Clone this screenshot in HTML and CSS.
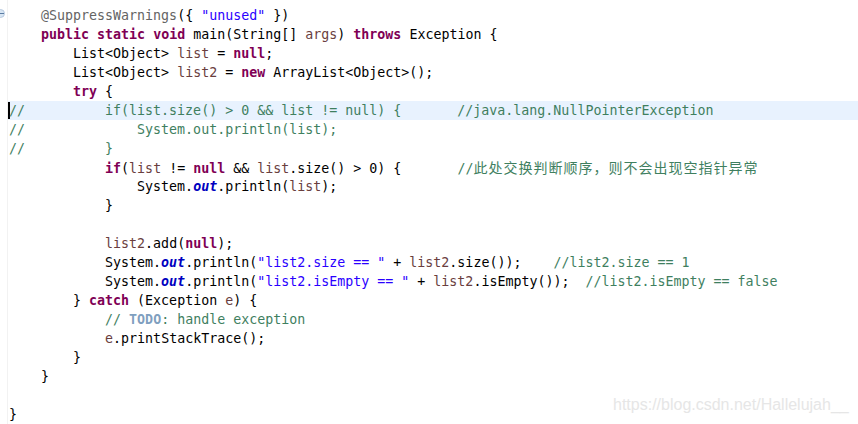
FILE: index.html
```html
<!DOCTYPE html>
<html>
<head>
<meta charset="utf-8">
<link rel="stylesheet" href="styles.css">
</head>
<body>
<div class="editor">
  <div class="ruler">
    <span class="fold"></span>
  </div>
  <div class="code">
<div class="ln">    <span class="an">@SuppressWarnings</span>({ <span class="s">"unused"</span> })</div>
<div class="ln">    <span class="k">public</span> <span class="k">static</span> <span class="k">void</span> main(String[] <span class="v">args</span>) <span class="k">throws</span> Exception {</div>
<div class="ln">        List&lt;Object&gt; <span class="v">list</span> = <span class="k">null</span>;</div>
<div class="ln">        List&lt;Object&gt; <span class="v">list2</span> = <span class="k">new</span> ArrayList&lt;Object&gt;();</div>
<div class="ln">        <span class="k">try</span> {</div>
<div class="ln cur"><span class="caret"></span><span class="c">//          if(list.size() &gt; 0 &amp;&amp; list != null) {       //java.lang.NullPointerException</span></div>
<div class="ln"><span class="c">//              System.out.println(list);</span></div>
<div class="ln"><span class="c">//          }</span></div>
<div class="ln">            <span class="k">if</span>(<span class="v">list</span> != <span class="k">null</span> &amp;&amp; <span class="v">list</span>.size() &gt; 0) {       <span class="c">//<span class="cjk">此处交换判断顺序，则不会出现空指针异常</span></span></div>
<div class="ln">                System.<span class="f">out</span>.println(<span class="v">list</span>);</div>
<div class="ln">            }</div>
<div class="ln"> </div>
<div class="ln">            <span class="v">list2</span>.add(<span class="k">null</span>);</div>
<div class="ln">            System.<span class="f">out</span>.println(<span class="s">"list2.size == "</span> + <span class="v">list2</span>.size());    <span class="c">//list2.size == 1</span></div>
<div class="ln">            System.<span class="f">out</span>.println(<span class="s">"list2.isEmpty == "</span> + <span class="v">list2</span>.isEmpty());  <span class="c">//list2.isEmpty == false</span></div>
<div class="ln">        } <span class="k">catch</span> (Exception <span class="v">e</span>) {</div>
<div class="ln">            <span class="c">// <span class="todo">TODO</span>: handle exception</span></div>
<div class="ln">            <span class="v">e</span>.printStackTrace();</div>
<div class="ln">        }</div>
<div class="ln">    }</div>
<div class="ln"> </div>
<div class="ln">}</div>
  </div>
</div>
<div class="watermark">https://blog.csdn.net/Hallelujah__</div>
</body>
</html>
```
FILE: styles.css
```css
html, body {
  margin: 0;
  padding: 0;
  background: #ffffff;
  width: 858px;
  height: 424px;
  overflow: hidden;
}
.editor {
  display: flex;
  height: 424px;
}
.ruler {
  width: 7px;
  flex: none;
  border-right: 1px solid #f2f2f2;
  position: relative;
}
.fold {
  position: absolute;
  left: -4px;
  top: 9px;
  width: 9px;
  height: 9px;
  border-radius: 50%;
  background: #d7e5f3;
  border: 1px solid #b9cbe0;
  box-sizing: border-box;
}
.fold::after {
  content: "";
  position: absolute;
  left: 2px;
  top: 3px;
  width: 5px;
  height: 1px;
  background: #5a7ca3;
}
.code {
  flex: 1;
  padding-top: 6px;
  font-family: "DejaVu Sans Mono", "Liberation Mono", monospace;
  font-size: 13.3px;
  color: #000000;
}
.ln {
  height: 19px;
  line-height: 19px;
  white-space: pre;
  padding-left: 1px;
}
.cur {
  background: #e8f2fe;
}
.caret {
  display: inline-block;
  width: 0;
  height: 17px;
  border-left: 2px solid #000;
  margin-left: -1px;
  margin-right: -1px;
  vertical-align: -4px;
}
.k { color: #7f0055; font-weight: bold; }
.s { color: #2a00ff; }
.c { color: #3f7f5f; }
.v { color: #6a3e3e; }
.f { color: #0000c0; font-weight: bold; font-style: italic; }
.an { color: #646464; }
.todo { color: #7f9fbf; font-weight: bold; }
.cjk {
  font-family: "Noto Sans CJK SC", sans-serif;
  font-size: 14px;
  letter-spacing: 1px;
}
.watermark {
  position: absolute;
  left: 613px;
  top: 396px;
  font-family: "Liberation Sans", Arial, sans-serif;
  font-size: 16px;
  color: #e6e6e6;
  white-space: nowrap;
}
```
